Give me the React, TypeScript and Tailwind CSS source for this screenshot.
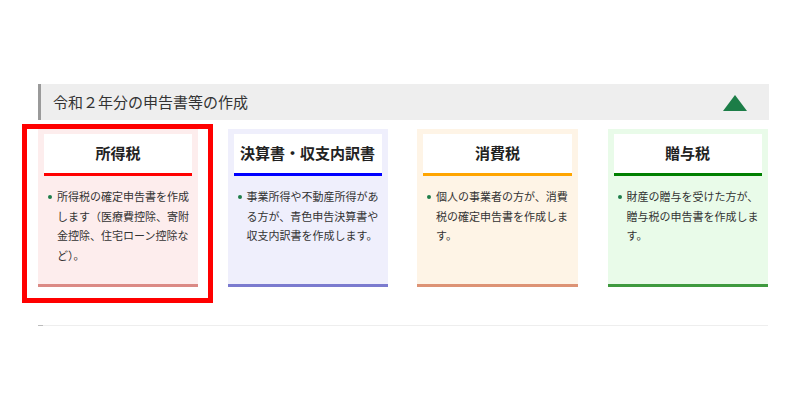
import React from 'react';

type Card = {
  title: string;
  body: string;
  bg: string;
  line: string;
  bottom: string;
  highlight?: boolean;
};

const cards: Card[] = [
  {
    title: '所得税',
    body: '所得税の確定申告書を作成します（医療費控除、寄附金控除、住宅ローン控除など）。',
    bg: 'bg-[#fdeded]',
    line: 'border-[#ff0000]',
    bottom: 'border-[#db8a85]',
    highlight: true,
  },
  {
    title: '決算書・収支内訳書',
    body: '事業所得や不動産所得がある方が、青色申告決算書や収支内訳書を作成します。',
    bg: 'bg-[#efeffc]',
    line: 'border-[#0000ff]',
    bottom: 'border-[#7b7bcf]',
  },
  {
    title: '消費税',
    body: '個人の事業者の方が、消費税の確定申告書を作成します。',
    bg: 'bg-[#fef4e6]',
    line: 'border-[#ffa500]',
    bottom: 'border-[#dd9375]',
  },
  {
    title: '贈与税',
    body: '財産の贈与を受けた方が、贈与税の申告書を作成します。',
    bg: 'bg-[#e9fbe9]',
    line: 'border-[#008000]',
    bottom: 'border-[#3f9a3f]',
  },
];

function TaxCard({ card }: { card: Card }) {
  return (
    <div className={`relative h-[158px] ${card.bg} border-b-[3px] ${card.bottom} pt-[5px] px-[6px]`}>
      {/* title box */}
      <div className={`h-[42px] bg-white border-b-[3px] ${card.line} flex items-center justify-center text-[15px] font-bold text-[#222]`}>
        {card.title}
      </div>

      <div className="flex mt-[11px] pl-[4px]">
        <span className="w-[4px] h-[4px] rounded-full bg-[#1e7e4a] mt-[8px] shrink-0" />
        <p className="ml-[5px] w-[134px] text-[11px] leading-[19.5px] text-[#333]">{card.body}</p>
      </div>

      {/* red annotation frame */}
      {card.highlight && (
        <div className="absolute -left-[16px] -top-[5px] -right-[15px] -bottom-[19px] border-[5px] border-[#ff0000] pointer-events-none" />
      )}
    </div>
  );
}

export default function App() {
  return (
    <div
      className="w-[800px] h-[400px] bg-white pt-[84px]"
      style={{ fontFamily: '"Noto Sans CJK JP", "Noto Sans", sans-serif' }}
    >
      <div className="ml-[38px] w-[731px]">
        {/* section header */}
        <div className="h-[36px] bg-[#eeeeee] border-l-[3px] border-[#9a9a9a] flex items-center justify-between pl-[12px] pr-[22px]">
          <span className="text-[15px] text-[#333]">令和２年分の申告書等の作成</span>
          <svg width="24" height="16" viewBox="0 0 24 16" className="mt-[2px]">
            <polygon points="12,0 24,16 0,16" fill="#1c7d47" />
          </svg>
        </div>

        <div className="grid grid-cols-[160px_160px_161px_160px] gap-x-[29.5px] mt-[9px] w-[730px]">
          {cards.map((c) => (
            <TaxCard key={c.title} card={c} />
          ))}
        </div>

        <div className="mt-[38px] h-[1px] bg-[#eeeeee] w-[730px] flex">
          <span className="w-[5px] h-[1px] bg-[#bbbbbb]" />
        </div>
      </div>
    </div>
  );
}
